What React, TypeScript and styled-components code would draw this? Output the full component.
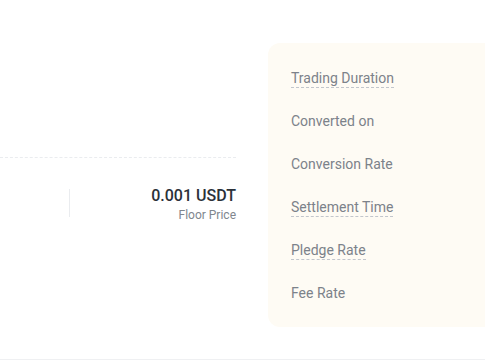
import React from "react";
import styled, { createGlobalStyle } from "styled-components";

const Global = createGlobalStyle`
  html, body { margin: 0; padding: 0; background: #ffffff; }
  body { font-family: Roboto, "Noto Sans", sans-serif; }
`;

const Page = styled.div`
  width: 485px;
  height: 360px;
  overflow: hidden;
  box-sizing: border-box;
  border-bottom: 1px solid #eff0f2;
  display: flex;
  align-items: flex-start;
  gap: 32px;
  padding-top: 43px;
`;

const LeftColumn = styled.div`
  flex: 0 0 236px;
  display: flex;
  flex-direction: column;
  padding-top: 114px;
`;

const DashedRule = styled.div`
  height: 0;
  border-top: 1px dashed #eaecef;
`;

const StatRow = styled.div`
  display: flex;
  align-items: flex-start;
  margin-top: 27px;
`;

const Divider = styled.div`
  width: 1px;
  height: 28px;
  background: #eaecef;
  margin: 4px 0 0 69px;
`;

const Stat = styled.div`
  flex: 1;
  display: flex;
  flex-direction: column;
  align-items: flex-end;
`;

const StatValue = styled.div`
  font-size: 16px;
  line-height: 22px;
  font-weight: 500;
  color: #2b3139;
`;

const StatLabel = styled.div`
  font-size: 12px;
  line-height: 16px;
  color: #80868e;
`;

const Panel = styled.div`
  flex: 0 0 240px;
  height: 284px;
  box-sizing: border-box;
  background: #fefbf4;
  border-radius: 12px;
  padding: 14px 0 0 23px;
  display: flex;
  flex-direction: column;
`;

const Row = styled.div`
  height: 43px;
  display: flex;
  align-items: center;
`;

const Term = styled.span<{ $dashed?: boolean }>`
  font-size: 14px;
  line-height: 18px;
  color: #7c828a;
  border-bottom: 1px ${(p) => (p.$dashed ? "dashed #c2c6cc" : "solid transparent")};
`;

const terms: { label: string; dashed: boolean }[] = [
  { label: "Trading Duration", dashed: true },
  { label: "Converted on", dashed: false },
  { label: "Conversion Rate", dashed: false },
  { label: "Settlement Time", dashed: true },
  { label: "Pledge Rate", dashed: true },
  { label: "Fee Rate", dashed: false },
];

export default function App() {
  return (
    <>
      <Global />
      <Page>
        <LeftColumn>
          <DashedRule />
          <StatRow>
            <Divider />
            <Stat>
              <StatValue>0.001 USDT</StatValue>
              <StatLabel>Floor Price</StatLabel>
            </Stat>
          </StatRow>
        </LeftColumn>
        <Panel>
          {terms.map((t) => (
            <Row key={t.label}>
              <Term $dashed={t.dashed}>{t.label}</Term>
            </Row>
          ))}
        </Panel>
      </Page>
    </>
  );
}
